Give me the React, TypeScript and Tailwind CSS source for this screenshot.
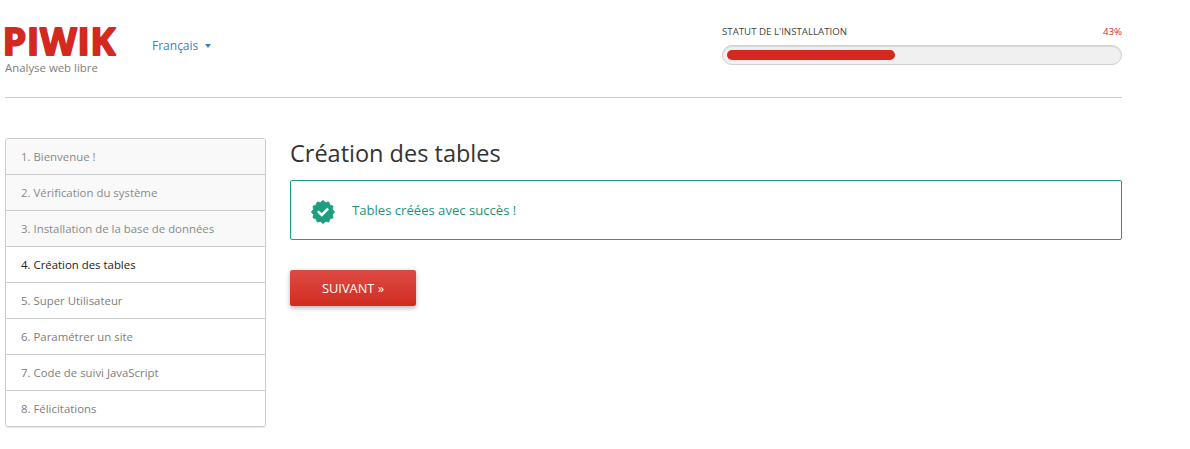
import React from "react";

const steps = [
  "1. Bienvenue !",
  "2. Vérification du système",
  "3. Installation de la base de données",
  "4. Création des tables",
  "5. Super Utilisateur",
  "6. Paramétrer un site",
  "7. Code de suivi JavaScript",
  "8. Félicitations",
];

function Badge() {
  const pts: string[] = [];
  const n = 12;
  for (let i = 0; i < n * 2; i++) {
    const r = i % 2 === 0 ? 11.6 : 9.8;
    const a = (Math.PI * i) / n - Math.PI / 2;
    pts.push(`${(12 + r * Math.cos(a)).toFixed(2)},${(12 + r * Math.sin(a)).toFixed(2)}`);
  }
  return (
    <svg width="24" height="24" viewBox="0 0 24 24" className="mt-[4px] shrink-0">
      <polygon points={pts.join(" ")} fill="#1c9e7f" stroke="#1c9e7f" strokeWidth="0.8" strokeLinejoin="round" />
      <path d="M7.8 12.2 L10.8 15 L16.2 9.6" fill="none" stroke="#fff" strokeWidth="2.5" strokeLinecap="square" />
    </svg>
  );
}

export default function App() {
  return (
    <div className="min-h-[449px] bg-white font-['Open_Sans',sans-serif]">
      <div className="ml-[5px] w-[1117px]">
        <header className="flex h-[98px] border-b border-[#cccccc]">
          <div className="w-[147px] pt-[14px]">
            <svg width="120" height="44" viewBox="0 0 120 44" className="-ml-[3px] block overflow-visible">
              <text
                x="0.5"
                y="40.5"
                textLength="113"
                lengthAdjust="spacing"
                fontFamily="'Open Sans', sans-serif"
                fontWeight="700"
                fontSize="38"
                fill="#d4291f"
                stroke="#d4291f"
                strokeWidth="1.8"
                strokeLinejoin="round"
              >
                PIWIK
              </text>
            </svg>
            <p className="mt-[2px] text-[11.4px] leading-[16px] text-[#7e7e7e]">Analyse web libre</p>
          </div>
          <div className="mt-[38px] flex h-[16px] items-center gap-[7px] text-[12px] leading-[16px] text-[#4080c0]">
            <span>Français</span>
            <span className="mt-[-1px] h-0 w-0 border-x-[3px] border-t-[4px] border-x-transparent border-t-[#4080c0]" />
          </div>
          <div className="ml-auto w-[400px] pt-[24px]">
            <div className="flex h-[16px] items-center justify-between text-[9.7px] leading-[16px]">
              <span className="text-[#444444]">STATUT DE L'INSTALLATION</span>
              <span className="text-[#d4293a]">43%</span>
            </div>
            <div className="mt-[5px] h-[20px] rounded-[10px] border border-[#d0d0d0] bg-[#f0f0f0] p-[4px] shadow-[inset_0_1px_1px_rgba(0,0,0,0.1)]">
              <div className="h-[10px] w-[168px] rounded-[5px] bg-[#d4291f]" />
            </div>
          </div>
        </header>

        <main className="mt-[40px] flex gap-[24px]">
          <ul className="w-[261px] shrink-0 self-start overflow-hidden rounded-[3px] border border-[#cccccc] shadow-[0_1px_1px_rgba(0,0,0,0.1)]">
            {steps.map((s, i) => (
              <li
                key={s}
                className={`flex items-center pl-[15px] text-[11.4px] ${i > 0 ? "h-[36px] border-t border-[#cccccc]" : "h-[35px]"} ${
                  i < 3 ? "bg-[#f9f9f9] text-[#8a8a8a]" : i === 3 ? "bg-white text-[#222222]" : "bg-white text-[#7e7e7e]"
                }`}
              >
                {s}
              </li>
            ))}
          </ul>

          <section className="min-w-0 flex-1">
            <h2 className="text-[23.5px] leading-[30px] text-[#333333]">Création des tables</h2>
            <div className="mt-[12px] flex h-[60px] items-center gap-[16px] rounded-[2px] border border-[#1c9e7f] pl-[20px]">
              <Badge />
              <span className="mt-[2px] pl-[1px] text-[13.1px] text-[#1a9478]">Tables créées avec succès !</span>
            </div>
            <button className="mt-[30px] block h-[36px] w-[126px] rounded-[2px] bg-gradient-to-b from-[#dd4a44] to-[#d12a1e] pt-[1px] text-center text-[12.8px] text-white shadow-[0_2px_5px_rgba(0,0,0,0.3)]">
              SUIVANT »
            </button>
          </section>
        </main>
      </div>
    </div>
  );
}
